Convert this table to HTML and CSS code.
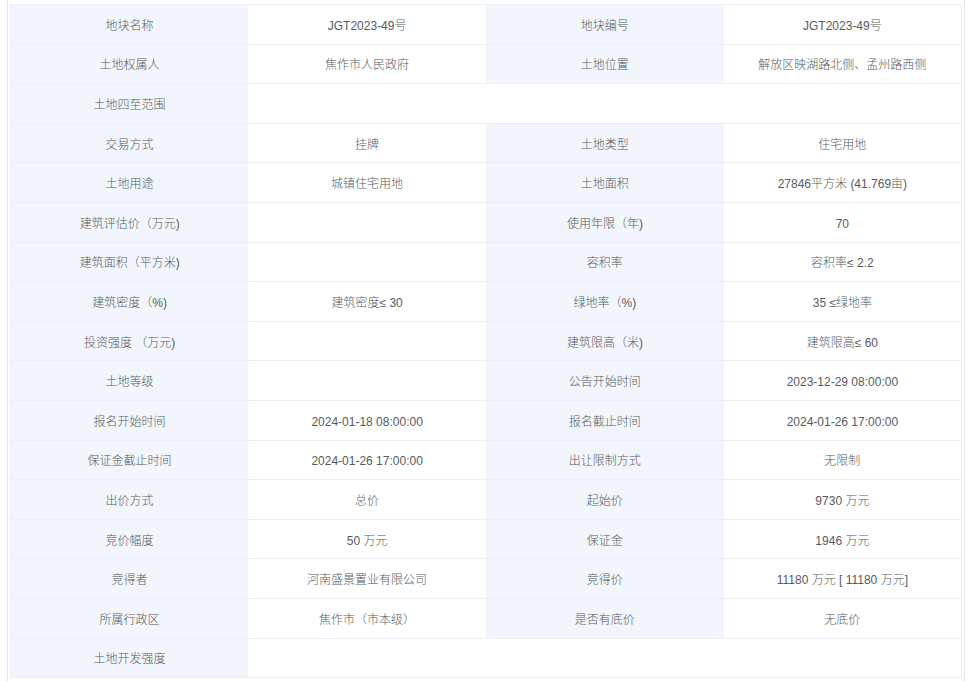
FILE: index.html
```html
<!DOCTYPE html>
<html lang="zh-CN">
<head>
<meta charset="utf-8">
<title>地块详情</title>
<link rel="stylesheet" href="styles.css">
</head>
<body>
<div class="panel">
  <table class="desc">
    <colgroup><col class="c"><col class="c"><col class="c"><col class="c"></colgroup>
    <tbody>
      <tr><th>地块名称</th><td>JGT2023-49号</td><th>地块编号</th><td>JGT2023-49号</td></tr>
      <tr><th>土地权属人</th><td>焦作市人民政府</td><th>土地位置</th><td>解放区映湖路北侧、孟州路西侧</td></tr>
      <tr><th>土地四至范围</th><td colspan="3"></td></tr>
      <tr><th>交易方式</th><td>挂牌</td><th>土地类型</th><td>住宅用地</td></tr>
      <tr><th>土地用途</th><td>城镇住宅用地</td><th>土地面积</th><td>27846平方米 (41.769亩)</td></tr>
      <tr><th>建筑评估价（万元)</th><td></td><th>使用年限（年)</th><td>70</td></tr>
      <tr><th>建筑面积（平方米)</th><td></td><th>容积率</th><td>容积率≤ 2.2</td></tr>
      <tr><th>建筑密度（%)</th><td>建筑密度≤ 30</td><th>绿地率（%)</th><td>35 ≤绿地率</td></tr>
      <tr><th>投资强度 （万元)</th><td></td><th>建筑限高（米)</th><td>建筑限高≤ 60</td></tr>
      <tr><th>土地等级</th><td></td><th>公告开始时间</th><td>2023-12-29 08:00:00</td></tr>
      <tr><th>报名开始时间</th><td>2024-01-18 08:00:00</td><th>报名截止时间</th><td>2024-01-26 17:00:00</td></tr>
      <tr><th>保证金截止时间</th><td>2024-01-26 17:00:00</td><th>出让限制方式</th><td>无限制</td></tr>
      <tr><th>出价方式</th><td>总价</td><th>起始价</th><td>9730 万元</td></tr>
      <tr><th>竞价幅度</th><td>50 万元</td><th>保证金</th><td>1946 万元</td></tr>
      <tr><th>竞得者</th><td>河南盛景置业有限公司</td><th>竞得价</th><td>11180 万元 [ 11180 万元]</td></tr>
      <tr><th>所属行政区</th><td>焦作市（市本级）</td><th>是否有底价</th><td>无底价</td></tr>
      <tr><th>土地开发强度</th><td colspan="3"></td></tr>
    </tbody>
  </table>
</div>
</body>
</html>
```
FILE: styles.css
```css
html, body {
  margin: 0;
  padding: 0;
  background: #ffffff;
}
body {
  font-family: "Liberation Sans", "Noto Sans CJK SC", sans-serif;
  font-size: 12px;
  color: #555a61;
}
.panel {
  margin-left: 7px;
  width: 958px;
  height: 681px;
  border-left: 1px solid #e6e6e6;
  border-right: 1px solid #e6e6e6;
  padding: 4px 0 0 2px;
  box-sizing: border-box;
}
.desc {
  width: 952px;
  border-collapse: collapse;
  table-layout: fixed;
  border: 1px solid #ebeef5;
}
.desc .c {
  width: 25%;
}
.desc th,
.desc td {
  height: 39.6px;
  padding: 3px 10px 0;
  box-sizing: border-box;
  text-align: center;
  font-weight: 300;
  border-bottom: 1px solid #ebeef5;
  line-height: 16px;
}
.desc th {
  background: #f2f6fc;
}
.desc td {
  background: #ffffff;
}
```
